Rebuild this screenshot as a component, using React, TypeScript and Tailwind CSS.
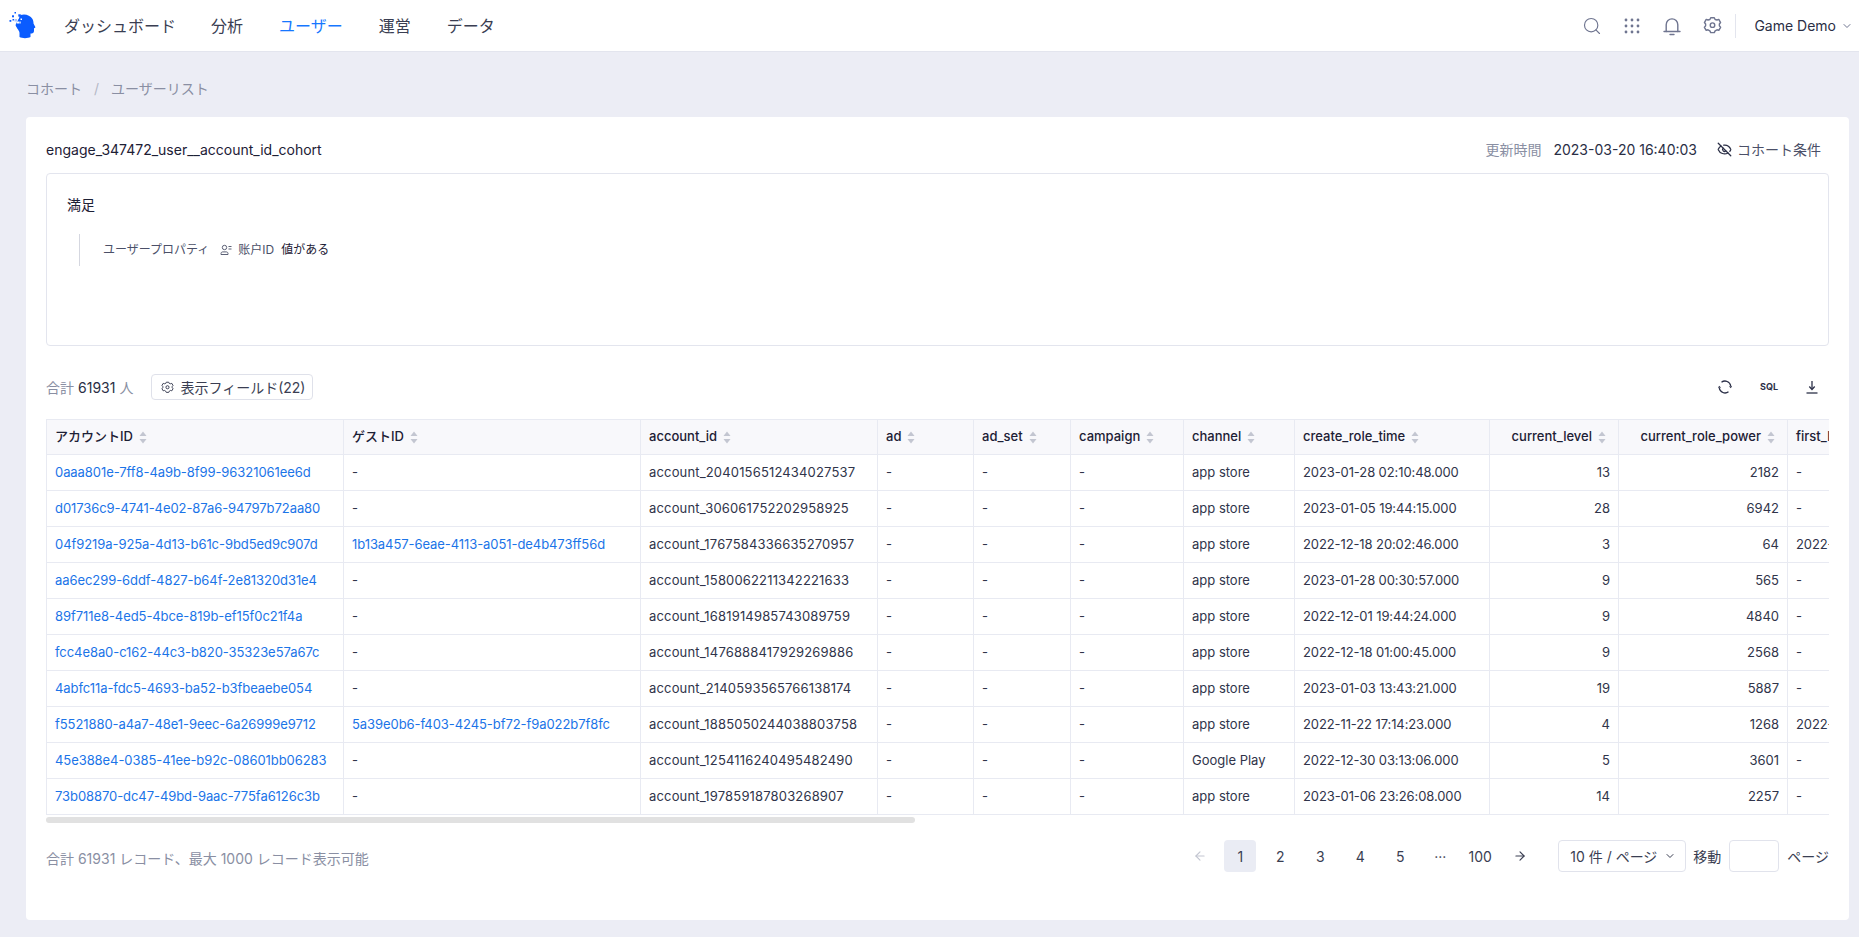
import { Search, ChevronDown, EyeOff, ArrowLeft, ArrowRight } from 'lucide-react';

const columns = [
  { label: 'アカウントID', width: 'w-[297px]' },
  { label: 'ゲストID', width: 'w-[297px]' },
  { label: 'account_id', width: 'w-[237px]' },
  { label: 'ad', width: 'w-[96px]' },
  { label: 'ad_set', width: 'w-[97px]' },
  { label: 'campaign', width: 'w-[113px]' },
  { label: 'channel', width: 'w-[111px]' },
  { label: 'create_role_time', width: 'w-[195px]' },
  { label: 'current_level', width: 'w-[129px]', right: true },
  { label: 'current_role_power', width: 'w-[169px]', right: true },
  { label: 'first_login_time', width: 'w-[200px]' },
];

const rows = [
  ['0aaa801e-7ff8-4a9b-8f99-96321061ee6d', '-', 'account_2040156512434027537', 'app store', '2023-01-28 02:10:48.000', '13', '2182', '-'],
  ['d01736c9-4741-4e02-87a6-94797b72aa80', '-', 'account_306061752202958925', 'app store', '2023-01-05 19:44:15.000', '28', '6942', '-'],
  ['04f9219a-925a-4d13-b61c-9bd5ed9c907d', '1b13a457-6eae-4113-a051-de4b473ff56d', 'account_1767584336635270957', 'app store', '2022-12-18 20:02:46.000', '3', '64', '2022-12-18 20:02:46.000'],
  ['aa6ec299-6ddf-4827-b64f-2e81320d31e4', '-', 'account_1580062211342221633', 'app store', '2023-01-28 00:30:57.000', '9', '565', '-'],
  ['89f711e8-4ed5-4bce-819b-ef15f0c21f4a', '-', 'account_1681914985743089759', 'app store', '2022-12-01 19:44:24.000', '9', '4840', '-'],
  ['fcc4e8a0-c162-44c3-b820-35323e57a67c', '-', 'account_1476888417929269886', 'app store', '2022-12-18 01:00:45.000', '9', '2568', '-'],
  ['4abfc11a-fdc5-4693-ba52-b3fbeaebe054', '-', 'account_2140593565766138174', 'app store', '2023-01-03 13:43:21.000', '19', '5887', '-'],
  ['f5521880-a4a7-48e1-9eec-6a26999e9712', '5a39e0b6-f403-4245-bf72-f9a022b7f8fc', 'account_1885050244038803758', 'app store', '2022-11-22 17:14:23.000', '4', '1268', '2022-11-22 17:14:23.000'],
  ['45e388e4-0385-41ee-b92c-08601bb06283', '-', 'account_1254116240495482490', 'Google Play', '2022-12-30 03:13:06.000', '5', '3601', '-'],
  ['73b08870-dc47-49bd-9aac-775fa6126c3b', '-', 'account_197859187803268907', 'app store', '2023-01-06 23:26:08.000', '14', '2257', '-'],
];

function Logo() {
  return (
    <svg width="28" height="28" viewBox="0 0 28 28" className="shrink-0">
      <path
        d="M12.500 3C17 1.500 22 3 24.500 7c1 2 1 3.500 1 4.500l1.800 3.500c.2.600-.3 1-1.300 1.200V19c0 2-1.500 2.500-3.500 2.500V25c-2.500 1.500-8.500 1.500-11 0v-4c0-2.500-2.500-4-4-8z"
        fill="#0a5cff"
      />
      <g fill="#0a5cff">
        <rect x="6.500" y="0" width="1.500" height="1.500" />
        <rect x="4" y="3.300" width="2" height="2" />
        <rect x="10.300" y="2.300" width="2.500" height="2.500" />
        <rect x="1.500" y="8" width="1.800" height="1.800" />
        <rect x="4.500" y="7" width="1.500" height="1.500" />
      </g>
      <g fill="#ffffff">
        <rect x="8" y="4.500" width="2.500" height="2.500" />
        <rect x="12.500" y="6.500" width="1.500" height="1.500" />
      </g>
      <g fill="#a9c6ff">
        <rect x="6.500" y="7" width="2.500" height="2.500" />
        <rect x="11" y="9.500" width="2" height="2" />
      </g>
      <g fill="#ffffff">
        <rect x="9" y="9.500" width="2" height="2" />
      </g>
    </svg>
  );
}

function DotGrid() {
  const dots = [3, 9, 15];
  return (
    <svg width="18" height="18" viewBox="0 0 18 18" fill="#6f7590">
      {dots.map((y) => dots.map((x) => <circle key={`${x}-${y}`} cx={x} cy={y} r="1.400" />))}
    </svg>
  );
}

function BellIcon() {
  return (
    <svg width="20" height="20" viewBox="0 0 20 20" fill="none" stroke="#6f7590" strokeWidth="1.400" strokeLinecap="round">
      <path d="M4.200 15.500V8.700a5.800 5.800 0 0 1 11.600 0v6.800" />
      <path d="M2 15.500h16" />
      <path d="M8 18.500h4" />
    </svg>
  );
}

function HexGear({ size, color }: { size: number; color: string }) {
  return (
    <svg width={size} height={size} viewBox="0 0 16 16" fill="none" stroke={color} strokeWidth="1.200" strokeLinejoin="round">
      <path d="M6.500 1.500h3l.7 1.500 1.600.4 1.500-.5 1.500 2.600-1 1.200v1.600l1 1.200-1.500 2.600-1.500-.5-1.600.9-.7 1.500h-3l-.7-1.500-1.600-.9-1.500.5-1.500-2.600 1-1.200V6.700l-1-1.200L2.700 2.900l1.500.5L5.800 3z" />
      <circle cx="8" cy="7.700" r="1.900" />
    </svg>
  );
}

function UserField() {
  return (
    <svg width="12" height="12" viewBox="0 0 12 12" fill="none" stroke="#4b5068" strokeWidth="0.900">
      <circle cx="4.500" cy="3.500" r="2.200" />
      <path d="M1 10.500V9.500c0-1 .8-1.600 1.800-1.600h3.400c1 0 1.800.6 1.800 1.600v1z" />
      <path d="M8.500 2.500h3M8.500 5h3" />
    </svg>
  );
}

function Refresh() {
  return (
    <svg width="14" height="14" viewBox="0 0 14 14" fill="none" stroke="#2c3048" strokeWidth="1.300">
      <path d="M3.500 2.200A5.800 5.800 0 0 1 12.700 6" />
      <path d="M10.500 11.800A5.800 5.800 0 0 1 1.300 8" />
      <path d="M11 6.200h3.200L12.700 8.200z" fill="#2c3048" stroke="none" />
      <path d="M3 7.800H-.2L1.300 5.800z" fill="#2c3048" stroke="none" />
    </svg>
  );
}

function DownloadIcon() {
  return (
    <svg width="14" height="14" viewBox="0 0 14 14" fill="none" stroke="#2c3048" strokeWidth="1.300" className="ml-[27px] mr-[10px]">
      <path d="M7 1v8" />
      <path d="M4.300 6.500L7 9.500l2.700-3" />
      <path d="M1.500 13h11" />
    </svg>
  );
}

function SortIcon() {
  return (
    <svg width="8" height="13" viewBox="0 0 8 13" fill="#c3c6d1" className="shrink-0">
      <path d="M4 0.500L7.500 5H0.500z" />
      <path d="M4 12.500L0.500 8h7z" />
    </svg>
  );
}

function Cell({ value, link, right, className }: { value: string; link?: boolean; right?: boolean; className?: string }) {
  const isLink = link && value !== '-';
  return (
    <td
      className={`h-[36px] border-r border-b border-[#e8eaf2] px-2 whitespace-nowrap overflow-hidden ${right ? 'text-right' : 'text-left'} ${isLink ? 'text-[#1b74e8]' : 'text-[#30344a]'} ${className ?? ''}`}
    >
      {value}
    </td>
  );
}

export default function App() {
  return (
    <div className="min-h-screen bg-[#ecedf5] font-['Inter','Noto_Sans_CJK_JP',sans-serif] text-[13px] text-[#2a2e45]">
      {/* Top nav */}
      <header className="h-[52px] bg-white border-b border-[#e3e5ee] flex items-center pl-[8px] pr-[6px]">
        <Logo />
        <nav className="flex items-center gap-[36px] ml-[28px] text-[16px] text-[#3a3e52]">
          <span className="mr-[-1px]">ダッシュボード</span>
          <span>分析</span>
          <span className="text-[#1677ff]">ユーザー</span>
          <span>運営</span>
          <span>データ</span>
        </nav>
        <div className="ml-auto flex items-center">
          <div className="flex items-center gap-[21px] text-[#6f7590]">
            <Search size={20} strokeWidth={1.400} />
            <DotGrid />
            <BellIcon />
            <HexGear size={19} color="#6f7590" />
          </div>
          <div className="w-px h-[24px] bg-[#e3e5ee] ml-[13px] mr-[18px]" />
          <span className="text-[14px] text-[#2a2e45]">Game Demo</span>
          <ChevronDown size={12} className="ml-[5px] text-[#6f7590]" />
        </div>
      </header>

      <main className="pl-[26px] pr-[10px]">
        <div className="h-[65px] pt-[8px] flex items-center text-[14px] text-[#8a8fa3]">
          <span>コホート</span>
          <span className="mx-[12px] text-[#b4b8c6]">/</span>
          <span>ユーザーリスト</span>
        </div>

        {/* Card */}
        <section className="h-[803px] bg-white rounded-[4px] px-[20px] pt-[20px]">
          <div className="h-[24px] flex items-center text-[14px] pr-[8px]">
            <span className="text-[#1d2035]">engage_347472_user__account_id_cohort</span>
            <span className="ml-auto text-[#8a8fa3]">更新時間</span>
            <span className="ml-[12px]">2023-03-20 16:40:03</span>
            <EyeOff size={15} className="ml-[20px] text-[#2a2e45]" />
            <span className="ml-[5px] text-[#4b5068]">コホート条件</span>
          </div>

          <div className="mt-[12px] h-[173px] border border-[#e3e5ee] rounded-[4px] pl-[20px] pt-[21px]">
            <div className="text-[14px] leading-[20px] text-[#1d2035]">満足</div>
            <div className="mt-[19px] ml-[12px] h-[32px] border-l border-[#d5d7e0] pl-[23px] flex items-center text-[12px] text-[#4b5068]">
              <span>ユーザープロパティ</span>
              <span className="ml-[11px]"><UserField /></span>
              <span className="ml-[6px]">账户ID</span>
              <span className="ml-[7px] text-[#1d2035]">値がある</span>
            </div>
          </div>

          {/* Toolbar */}
          <div className="mt-[28px] h-[26px] flex items-center text-[14px]">
            <span className="text-[#8a8fa3]">合計</span>
            <span className="ml-[4px] text-[#2a2e45]">61931</span>
            <span className="ml-[4px] text-[#8a8fa3]">人</span>
            <button className="ml-[18px] h-[26px] w-[162px] border border-[#dfe1ea] rounded-[4px] flex items-center pl-[9px] text-[#3a3e52]">
              <HexGear size={13} color="#3a3e52" />
              <span className="ml-[6px]">表示フィールド(22)</span>
            </button>
            <div className="ml-auto flex items-center text-[#2c3048]">
              <Refresh />
              <span className="ml-[28px] text-[9px] font-bold">SQL</span>
              <DownloadIcon />
            </div>
          </div>

          {/* Table */}
          <div className="mt-[19px] overflow-hidden border-t border-l border-[#e8eaf2]">
            <table className="table-fixed border-separate border-spacing-0 w-[1841px]">
              <thead>
                <tr>
                  {columns.map((c) => (
                    <th
                      key={c.label}
                      className={`${c.width} h-[35px] bg-[#f8f8fb] border-r border-b border-[#e8eaf2] font-medium text-[#1d2035] whitespace-nowrap overflow-hidden ${c.right ? 'pl-2 pr-[12px]' : 'px-2'}`}
                    >
                      <div className={`flex items-center gap-[6px] ${c.right ? 'justify-end' : ''}`}>
                        <span>{c.label}</span>
                        <SortIcon />
                      </div>
                    </th>
                  ))}
                </tr>
              </thead>
              <tbody>
                {rows.map((r) => (
                  <tr key={r[0]}>
                    <Cell value={r[0]} link className="tracking-[-0.07px]" />
                    <Cell value={r[1]} link className="tracking-[-0.07px]" />
                    <Cell value={r[2]} className="tracking-[0.16px]" />
                    <Cell value="-" />
                    <Cell value="-" />
                    <Cell value="-" />
                    <Cell value={r[3]} />
                    <Cell value={r[4]} className="tracking-[-0.1px]" />
                    <Cell value={r[5]} right />
                    <Cell value={r[6]} right />
                    <Cell value={r[7]} className="tracking-[-0.1px]" />
                  </tr>
                ))}
              </tbody>
            </table>
          </div>
          <div className="mt-[2px] h-[6px] w-[869px] rounded-full bg-[#e1e1e1]" />

          {/* Footer */}
          <div className="mt-[17px] h-[32px] flex items-center text-[14px] text-[#3a3e52]">
            <span className="mt-[5px] text-[#8a8fa3]">合計 61931 レコード、最大 1000 レコード表示可能</span>
            <div className="ml-auto flex items-center gap-[8px]">
              <span className="w-[32px] h-[32px] flex items-center justify-center text-[#c3c6d1]"><ArrowLeft size={14} /></span>
              <span className="w-[32px] h-[32px] flex items-center justify-center rounded-[4px] bg-[#eaecf4]">1</span>
              {['2', '3', '4', '5', '···', '100'].map((p) => (
                <span key={p} className="w-[32px] h-[32px] flex items-center justify-center">{p}</span>
              ))}
              <span className="w-[32px] h-[32px] flex items-center justify-center"><ArrowRight size={14} /></span>
            </div>
            <div className="ml-[22px] w-[128px] h-[32px] border border-[#e1e3ec] rounded-[4px] flex items-center pl-[11px]">
              <span className="whitespace-nowrap">10 件 / ページ</span>
              <ChevronDown size={12} className="ml-[7px] shrink-0" />
            </div>
            <span className="ml-[7px]">移動</span>
            <div className="ml-[8px] w-[50px] h-[32px] border border-[#e1e3ec] rounded-[4px]" />
            <span className="ml-[8px]">ページ</span>
          </div>
        </section>
      </main>
    </div>
  );
}
